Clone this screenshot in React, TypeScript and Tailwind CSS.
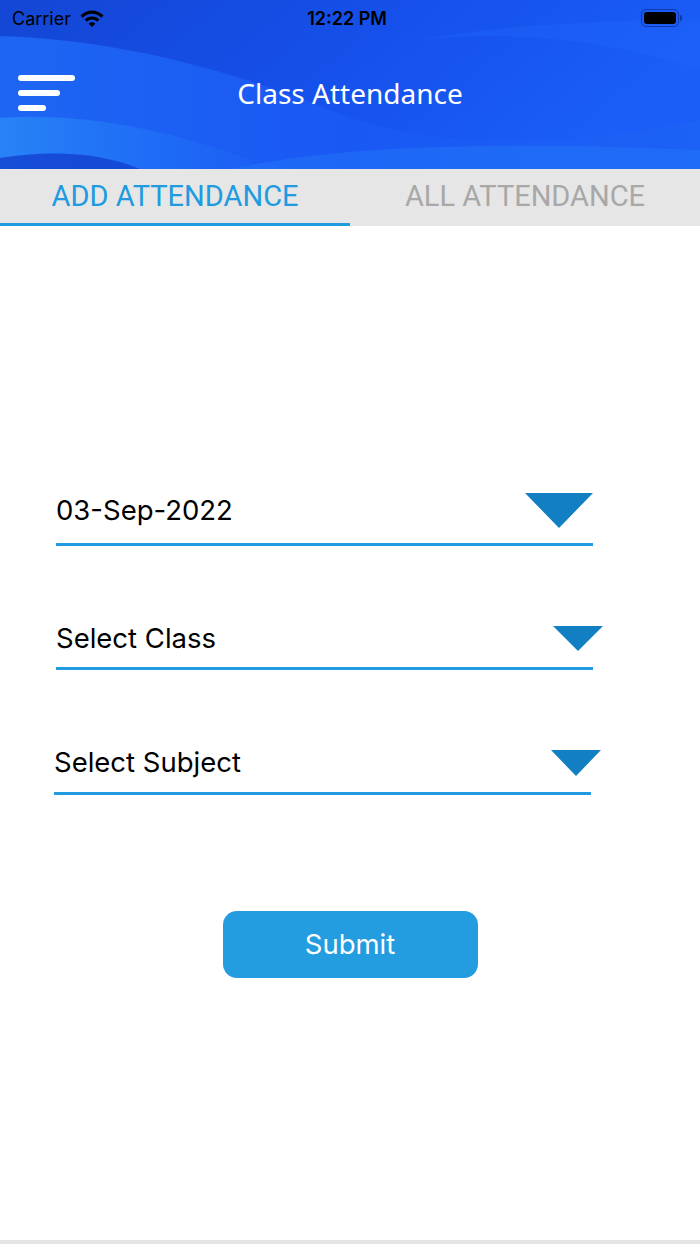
import React from "react";

const fields = [
  { label: "03-Sep-2022", box: "ml-[56px] w-[537px] mt-[267px]", row: "h-[35px]", tri: "w-[68px] h-[35px]", gap: "mt-[15px]" },
  { label: "Select Class", box: "ml-[56px] w-[537px] mt-[80px]", row: "h-[25px]", tri: "w-[50px] h-[25px] -mr-[10px]", gap: "mt-[16px]" },
  { label: "Select Subject", box: "ml-[54px] w-[537px] mt-[80px]", row: "h-[26px]", tri: "w-[50px] h-[26px] -mr-[10px]", gap: "mt-[16px]" },
];

function HeaderWaves() {
  return (
    <svg className="absolute inset-0 w-full h-full" viewBox="0 0 700 169" preserveAspectRatio="none">
      <defs>
        <linearGradient id="base" x1="0" y1="0" x2="1" y2="0.3">
          <stop offset="0" stopColor="#1446d4" />
          <stop offset="0.55" stopColor="#1650ea" />
          <stop offset="1" stopColor="#1a5ef7" />
        </linearGradient>
        <linearGradient id="band" x1="0" y1="0" x2="1" y2="0">
          <stop offset="0" stopColor="#1d66f2" />
          <stop offset="0.5" stopColor="#1a58f4" />
          <stop offset="1" stopColor="#1c62f6" />
        </linearGradient>
        <linearGradient id="glow" x1="0" y1="0" x2="1" y2="0">
          <stop offset="0" stopColor="#2a86f6" stopOpacity="0.9" />
          <stop offset="0.6" stopColor="#2178f8" stopOpacity="0.5" />
          <stop offset="1" stopColor="#1f6cf8" stopOpacity="0.2" />
        </linearGradient>
      </defs>
      <rect width="700" height="169" fill="url(#base)" />
      <path d="M0 36 C120 40 230 70 330 110 C430 150 560 150 700 120 L700 169 L0 169 Z" fill="url(#band)" />
      <path d="M0 118 C80 112 170 130 250 160 L260 169 L0 169 Z" fill="url(#glow)" />
      <path d="M230 169 C330 148 470 140 700 150 L700 169 Z" fill="#2275f7" opacity="0.55" />
      <path d="M0 158 C50 150 100 152 140 169 L0 169 Z" fill="#1340d0" opacity="0.8" />
      <path d="M420 40 C520 30 610 40 700 70 L700 20 C600 20 500 25 420 40 Z" fill="#1f64f8" opacity="0.45" />
    </svg>
  );
}

function Wifi() {
  return (
    <svg width="26" height="19" viewBox="0 0 26 19" className="ml-[8px]">
      <path d="M1.5 6.5 A16 16 0 0 1 24.5 6.5 L22.3 8.7 A13 13 0 0 0 3.7 8.7 Z" fill="#000" />
      <path d="M5.6 10.6 A10.3 10.3 0 0 1 20.4 10.6 L18.2 12.8 A7.3 7.3 0 0 0 7.8 12.8 Z" fill="#000" />
      <path d="M9.7 14.7 A4.6 4.6 0 0 1 16.3 14.7 L13 18 Z" fill="#000" />
    </svg>
  );
}

function Battery() {
  return (
    <div className="flex items-center">
      <div className="w-[38px] h-[18px] rounded-[5px] border-[1.5px] border-[#0b2a8a]/70 p-[2px]">
        <div className="w-full h-full rounded-[3px] bg-black" />
      </div>
      <div className="w-[2px] h-[6px] rounded-r-sm bg-[#0b2a8a]/70 ml-[1px]" />
    </div>
  );
}

export default function App() {
  return (
    <div className="w-[700px] h-[1244px] bg-white flex flex-col overflow-hidden" style={{ fontFamily: "Inter, 'Noto Sans', sans-serif" }}>
      {/* Header */}
      <div className="relative h-[169px] shrink-0">
        <HeaderWaves />
        <div className="relative flex flex-col">
          <div className="h-[36px] flex items-center px-[12px]">
            <div className="flex-1 flex items-center">
              <span className="text-[18px] text-black">Carrier</span>
              <Wifi />
            </div>
            <span className="text-[18px] font-semibold text-black">12:22 PM</span>
            <div className="flex-1 flex justify-end pr-[6px]">
              <Battery />
            </div>
          </div>
          <div className="h-[116px] flex items-center relative">
            <div className="absolute left-[18px] top-[39px] flex flex-col gap-[9px]">
              <div className="w-[57px] h-[6px] rounded-full bg-white" />
              <div className="w-[42px] h-[6px] rounded-full bg-white" />
              <div className="w-[28px] h-[6px] rounded-full bg-white" />
            </div>
            <div className="w-full text-center text-[28px] leading-none text-white pb-[2px]" style={{ fontFamily: "'Noto Sans', Inter, sans-serif" }}>
              Class Attendance
            </div>
          </div>
        </div>
      </div>

      {/* Tabs */}
      <div className="h-[57px] shrink-0 bg-[#e6e6e6] flex" style={{ fontFamily: "Roboto, sans-serif" }}>
        <div className="w-[350px] flex flex-col">
          <div className="flex-1 flex items-center justify-center text-[29px] text-[#219bdf] pt-[2px]">ADD ATTENDANCE</div>
          <div className="h-[3px] bg-[#219bdf]" />
        </div>
        <div className="flex-1 flex items-center justify-center text-[29px] text-[#a8a8a8] pb-[1px]">ALL ATTENDANCE</div>
      </div>

      {/* Form */}
      <div className="flex-1 flex flex-col">
        {fields.map((f) => (
          <div key={f.label} className={f.box}>
            <div className={`flex items-center justify-between ${f.row}`}>
              <span className="text-[27.5px] text-black leading-none">{f.label}</span>
              <svg className={f.tri} viewBox="0 0 68 35" preserveAspectRatio="none">
                <polygon points="0,0 68,0 34,35" fill="#127fc3" />
              </svg>
            </div>
            <div className={`h-[3px] bg-[#229be0] ${f.gap}`} />
          </div>
        ))}

        <div className="mt-[116px] flex justify-center">
          <button className="w-[255px] h-[67px] rounded-[14px] bg-[#239ddf] text-white text-[27.5px]">Submit</button>
        </div>
      </div>
      <div className="h-[4px] shrink-0 bg-[#e4e4e4]" />
    </div>
  );
}
